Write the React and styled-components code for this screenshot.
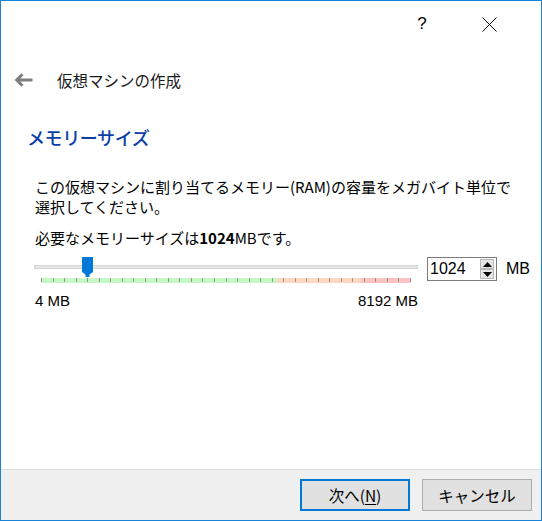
import React from 'react'
import styled, { createGlobalStyle } from 'styled-components'

const GlobalStyle = createGlobalStyle`
  html, body {
    margin: 0;
    padding: 0;
    background: #ffffff;
  }
  body {
    font-family: 'Noto Sans CJK JP', 'Noto Sans', sans-serif;
    color: #000;
  }
`

const TICKS = 33

const App = () => {
  return (
    <>
      <GlobalStyle />
      <Window>
        <TitleBar>
          <CaptionButton aria-label='help'>?</CaptionButton>
          <CaptionButton aria-label='close'>
            <svg width='15' height='15' viewBox='0 0 15 15'>
              <path d='M0.5 0.5 L14.5 14.5 M14.5 0.5 L0.5 14.5' stroke='#000' strokeWidth='1' fill='none' />
            </svg>
          </CaptionButton>
        </TitleBar>

        <HeaderRow>
          <BackArrow>
            <svg width='19' height='14' viewBox='0 0 19 14'>
              <path d='M18.5 7 H3 M8.5 1.2 L2.7 7 L8.5 12.8' stroke='#7d7d7d' strokeWidth='3' fill='none' />
            </svg>
          </BackArrow>
          <WizardTitle>仮想マシンの作成</WizardTitle>
        </HeaderRow>

        <PageHeading>メモリーサイズ</PageHeading>

        <Content>
          <Description>
            この仮想マシンに割り当てるメモリー(RAM)の容量をメガバイト単位で
            <br />
            選択してください。
          </Description>
          <Recommended>
            必要なメモリーサイズは<b>1024</b>MBです。
          </Recommended>

          <SliderRow>
            <SliderColumn>
              <TrackArea>
                <Track />
                <Handle>
                  <svg width='11' height='20' viewBox='0 0 11 20'>
                    <path d='M0 0 H11 V15 L7.5 17.5 V20 H3.5 V17.5 L0 15 Z' fill='#0078d7' />
                  </svg>
                </Handle>
              </TrackArea>
              <TickBar>
                {Array.from({ length: TICKS }).map((_, i) => (
                  <Tick key={i} />
                ))}
              </TickBar>
              <RangeLabels>
                <span>4 MB</span>
                <span>8192 MB</span>
              </RangeLabels>
            </SliderColumn>

            <SpinBox>
              <SpinValue>1024</SpinValue>
              <SpinButtons>
                <SpinButton>
                  <svg width='9' height='5' viewBox='0 0 9 5'>
                    <path d='M0 5 L4.5 0 L9 5 Z' fill='#000' />
                  </svg>
                </SpinButton>
                <SpinButton>
                  <svg width='9' height='5' viewBox='0 0 9 5'>
                    <path d='M0 0 L4.5 5 L9 0 Z' fill='#000' />
                  </svg>
                </SpinButton>
              </SpinButtons>
            </SpinBox>
            <Unit>MB</Unit>
          </SliderRow>
        </Content>

        <Footer>
          <DialogButton $primary>
            次へ(<u>N</u>)
          </DialogButton>
          <DialogButton>キャンセル</DialogButton>
        </Footer>
      </Window>
    </>
  )
}

const Window = styled.div`
  width: 542px;
  height: 521px;
  box-sizing: border-box;
  border: 1px solid #1883d7;
  background: #ffffff;
  display: flex;
  flex-direction: column;
`

const TitleBar = styled.div`
  height: 46px;
  display: flex;
  justify-content: flex-end;
  align-items: center;
  gap: 21px;
  padding-right: 29px;
`

const CaptionButton = styled.div`
  width: 46px;
  height: 30px;
  display: flex;
  align-items: center;
  justify-content: center;
  font-family: 'Liberation Sans', sans-serif;
  font-size: 17px;
  color: #000;
`

const HeaderRow = styled.div`
  display: flex;
  align-items: center;
  margin-top: 21px;
  padding-left: 13px;
  height: 24px;
`

const BackArrow = styled.div`
  width: 19px;
  height: 14px;
  display: flex;
  margin-right: 24px;
`

const WizardTitle = styled.div`
  font-size: 15.5px;
  line-height: 24px;
  color: #1a1a1a;
`

const PageHeading = styled.h1`
  margin: 32px 0 0 26px;
  font-size: 18px;
  font-weight: 500;
  letter-spacing: -0.4px;
  line-height: 26px;
  color: #0b3fa8;
`

const Content = styled.div`
  padding-left: 34px;
  margin-top: 27px;
`

const Description = styled.p`
  margin: 0;
  font-size: 15px;
  line-height: 20px;
  white-space: nowrap;
`

const Recommended = styled.p`
  margin: 11px 0 0;
  font-size: 15px;
  line-height: 20px;
  white-space: nowrap;

  b {
    font-weight: 700;
  }
`

const SliderRow = styled.div`
  display: flex;
  align-items: flex-start;
  margin-top: 9px;
  margin-left: -1px;
`

const SliderColumn = styled.div`
  width: 384px;
  display: flex;
  flex-direction: column;
`

const TrackArea = styled.div`
  position: relative;
  height: 20px;
  display: flex;
  align-items: center;
`

const Track = styled.div`
  width: 100%;
  height: 4px;
  box-sizing: border-box;
  background: #e7e7e7;
  border: 1px solid #d4d4d4;
`

const Handle = styled.div`
  position: absolute;
  left: 48px;
  top: 0;
  width: 11px;
  height: 20px;
  display: flex;
`

const TickBar = styled.div`
  margin: 1px 0 0 7px;
  width: 370px;
  height: 5px;
  display: flex;
  justify-content: space-between;
  align-items: flex-start;
  background: linear-gradient(
    to right,
    #c6f8c6 0,
    #c6f8c6 236px,
    #ffd8c2 236px,
    #ffd8c2 320px,
    #ffc2c2 320px,
    #ffc2c2 100%
  );
`

const Tick = styled.div`
  width: 1px;
  height: 4px;
  background: #9a948c;
`

const RangeLabels = styled.div`
  display: flex;
  justify-content: space-between;
  margin-top: 9px;
  font-family: 'Liberation Sans', sans-serif;
  font-size: 15px;
  line-height: 18px;
  padding-left: 1px;
`

const SpinBox = styled.div`
  margin-left: 9px;
  width: 70px;
  height: 24px;
  box-sizing: border-box;
  border: 1px solid #7a7a7a;
  display: flex;
  align-items: center;
  justify-content: space-between;
  padding: 0 2px 0 2px;
  background: #fff;
`

const SpinValue = styled.span`
  font-family: 'Liberation Sans', sans-serif;
  font-size: 16px;
  line-height: 20px;
`

const SpinButtons = styled.div`
  display: flex;
  flex-direction: column;
`

const SpinButton = styled.div`
  width: 14px;
  height: 10px;
  box-sizing: border-box;
  background: #e5e5e5;
  border: 1px solid #b8b8b8;
  display: flex;
  align-items: center;
  justify-content: center;
`

const Unit = styled.span`
  margin-left: 9px;
  font-family: 'Liberation Sans', sans-serif;
  font-size: 16px;
  line-height: 24px;
`

const Footer = styled.div`
  margin-top: auto;
  height: 51px;
  box-sizing: border-box;
  border-top: 1px solid #dfdfdf;
  background: #f0f0f0;
  display: flex;
  justify-content: flex-end;
  align-items: flex-start;
  gap: 12px;
  padding: 9px 9px 0 0;
`

const DialogButton = styled.div`
  width: 110px;
  height: 32px;
  box-sizing: border-box;
  background: #e1e1e1;
  border: ${(p) => (p.$primary ? '2px solid #0078d7' : '1px solid #adadad')};
  display: flex;
  align-items: center;
  justify-content: center;
  font-size: 15.5px;
  line-height: 20px;
  color: #000;

  u {
    text-decoration-thickness: 1px;
    text-underline-offset: 2px;
  }
`

export default App
